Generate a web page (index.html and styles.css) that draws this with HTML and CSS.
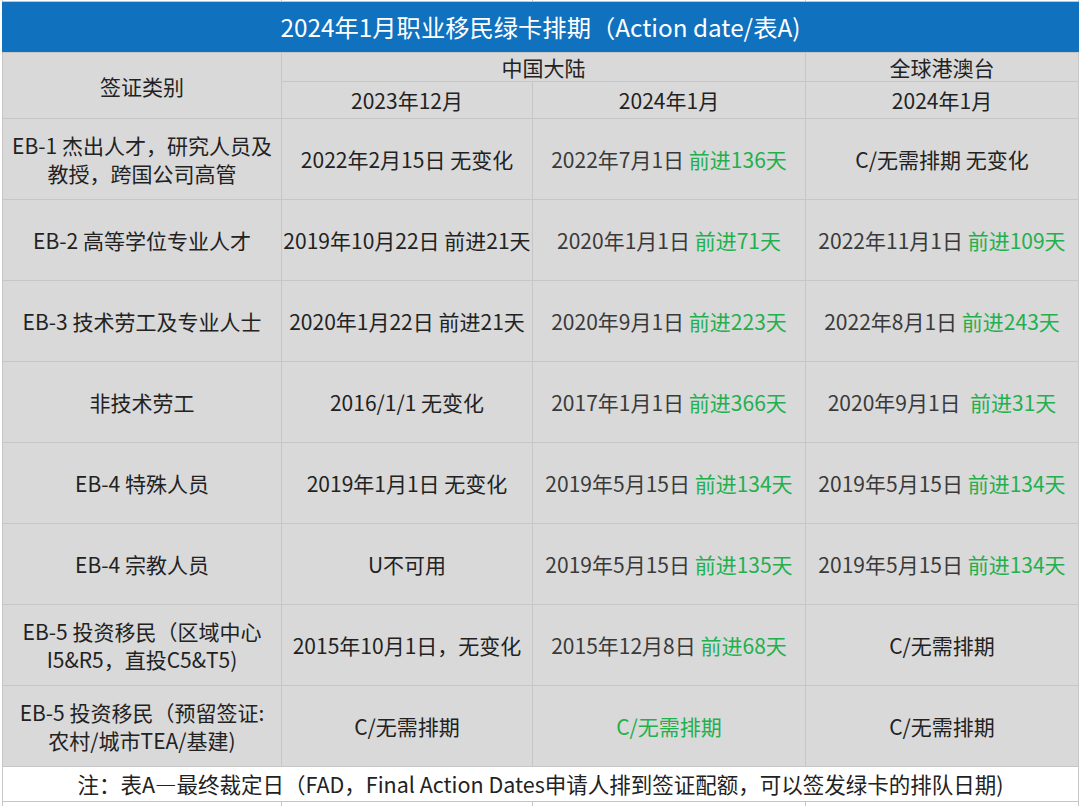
FILE: index.html
```html
<!DOCTYPE html>
<html lang="zh-CN">
<head>
<meta charset="utf-8">
<title>2024年1月职业移民绿卡排期</title>
<link rel="stylesheet" href="styles.css">
</head>
<body>
<table class="sheet">
  <colgroup>
    <col class="c1"><col class="c2"><col class="c3"><col class="c4">
  </colgroup>
  <tr class="stub"><td></td><td></td><td></td><td></td></tr>
  <tr class="title"><td colspan="4">2024年1月职业移民绿卡排期（Action date/表A)</td></tr>
  <tr class="h1">
    <td rowspan="2">签证类别</td>
    <td colspan="2">中国大陆</td>
    <td>全球港澳台</td>
  </tr>
  <tr class="h2">
    <td>2023年12月</td>
    <td>2024年1月</td>
    <td>2024年1月</td>
  </tr>
  <tr class="row">
    <td>EB-1 杰出人才，研究人员及<br>教授，跨国公司高管</td>
    <td>2022年2月15日 无变化</td>
    <td class="soft">2022年7月1日 <span class="up">前进136天</span></td>
    <td>C/无需排期 无变化</td>
  </tr>
  <tr class="row">
    <td>EB-2 高等学位专业人才</td>
    <td>2019年10月22日 前进21天</td>
    <td class="soft">2020年1月1日 <span class="up">前进71天</span></td>
    <td class="soft">2022年11月1日 <span class="up">前进109天</span></td>
  </tr>
  <tr class="row">
    <td>EB-3 技术劳工及专业人士</td>
    <td>2020年1月22日 前进21天</td>
    <td class="soft">2020年9月1日 <span class="up">前进223天</span></td>
    <td class="soft">2022年8月1日 <span class="up">前进243天</span></td>
  </tr>
  <tr class="row">
    <td>非技术劳工</td>
    <td>2016/1/1 无变化</td>
    <td class="soft">2017年1月1日 <span class="up">前进366天</span></td>
    <td class="soft">2020年9月1日&nbsp; <span class="up">前进31天</span></td>
  </tr>
  <tr class="row">
    <td>EB-4 特殊人员</td>
    <td>2019年1月1日 无变化</td>
    <td class="soft">2019年5月15日 <span class="up">前进134天</span></td>
    <td class="soft">2019年5月15日 <span class="up">前进134天</span></td>
  </tr>
  <tr class="row">
    <td>EB-4 宗教人员</td>
    <td>U不可用</td>
    <td class="soft">2019年5月15日 <span class="up">前进135天</span></td>
    <td class="soft">2019年5月15日 <span class="up">前进134天</span></td>
  </tr>
  <tr class="row">
    <td>EB-5 投资移民（区域中心<br>I5&amp;R5，直投C5&amp;T5)</td>
    <td>2015年10月1日，无变化</td>
    <td class="soft">2015年12月8日 <span class="up">前进68天</span></td>
    <td>C/无需排期</td>
  </tr>
  <tr class="row">
    <td>EB-5 投资移民（预留签证:<br>农村/城市TEA/基建)</td>
    <td>C/无需排期</td>
    <td class="up">C/无需排期</td>
    <td>C/无需排期</td>
  </tr>
  <tr class="note"><td colspan="4">注：表A—最终裁定日（FAD，Final Action Dates申请人排到签证配额，可以签发绿卡的排队日期)</td></tr>
  <tr class="tail"><td></td><td></td><td></td><td></td></tr>
</table>
</body>
</html>
```

FILE: styles.css
```css
html, body {
  margin: 0;
  padding: 0;
  background: #ffffff;
}
body {
  width: 1080px;
  height: 806px;
  overflow: hidden;
  font-family: "Noto Sans CJK SC", "Noto Sans", sans-serif;
  color: #222222;
}
.sheet {
  margin-left: 2px;
  margin-top: -1px;
  border-collapse: collapse;
  table-layout: fixed;
  width: 1076px;
}
.c1 { width: 279px; }
.c2 { width: 251px; }
.c3 { width: 273px; }
.c4 { width: 273px; }
.sheet td {
  border: 1px solid #c6c6c6;
  background: #d9d9d9;
  text-align: center;
  vertical-align: middle;
  padding: 0;
  font-size: 21px;
  line-height: 28px;
  white-space: nowrap;
  overflow: hidden;
}
.stub td {
  height: 2px;
  background: #ffffff;
  border-top: none;
}
.title td {
  height: 50px;
  background: #1071bf;
  border-color: #1071bf;
  border-bottom-color: #c6c6c6;
  color: #ffffff;
  font-size: 24.3px;
}
.h1 td { height: 28px; }
.h2 td { height: 36px; }
.row td { height: 80px; }
.soft { color: #3a3a3a; }
.sheet .up { color: #22b04e; }
.note td {
  height: 34px;
  background: #ffffff;
  font-size: 21.5px;
}
.tail td {
  height: 10px;
  background: #ffffff;
}
```
